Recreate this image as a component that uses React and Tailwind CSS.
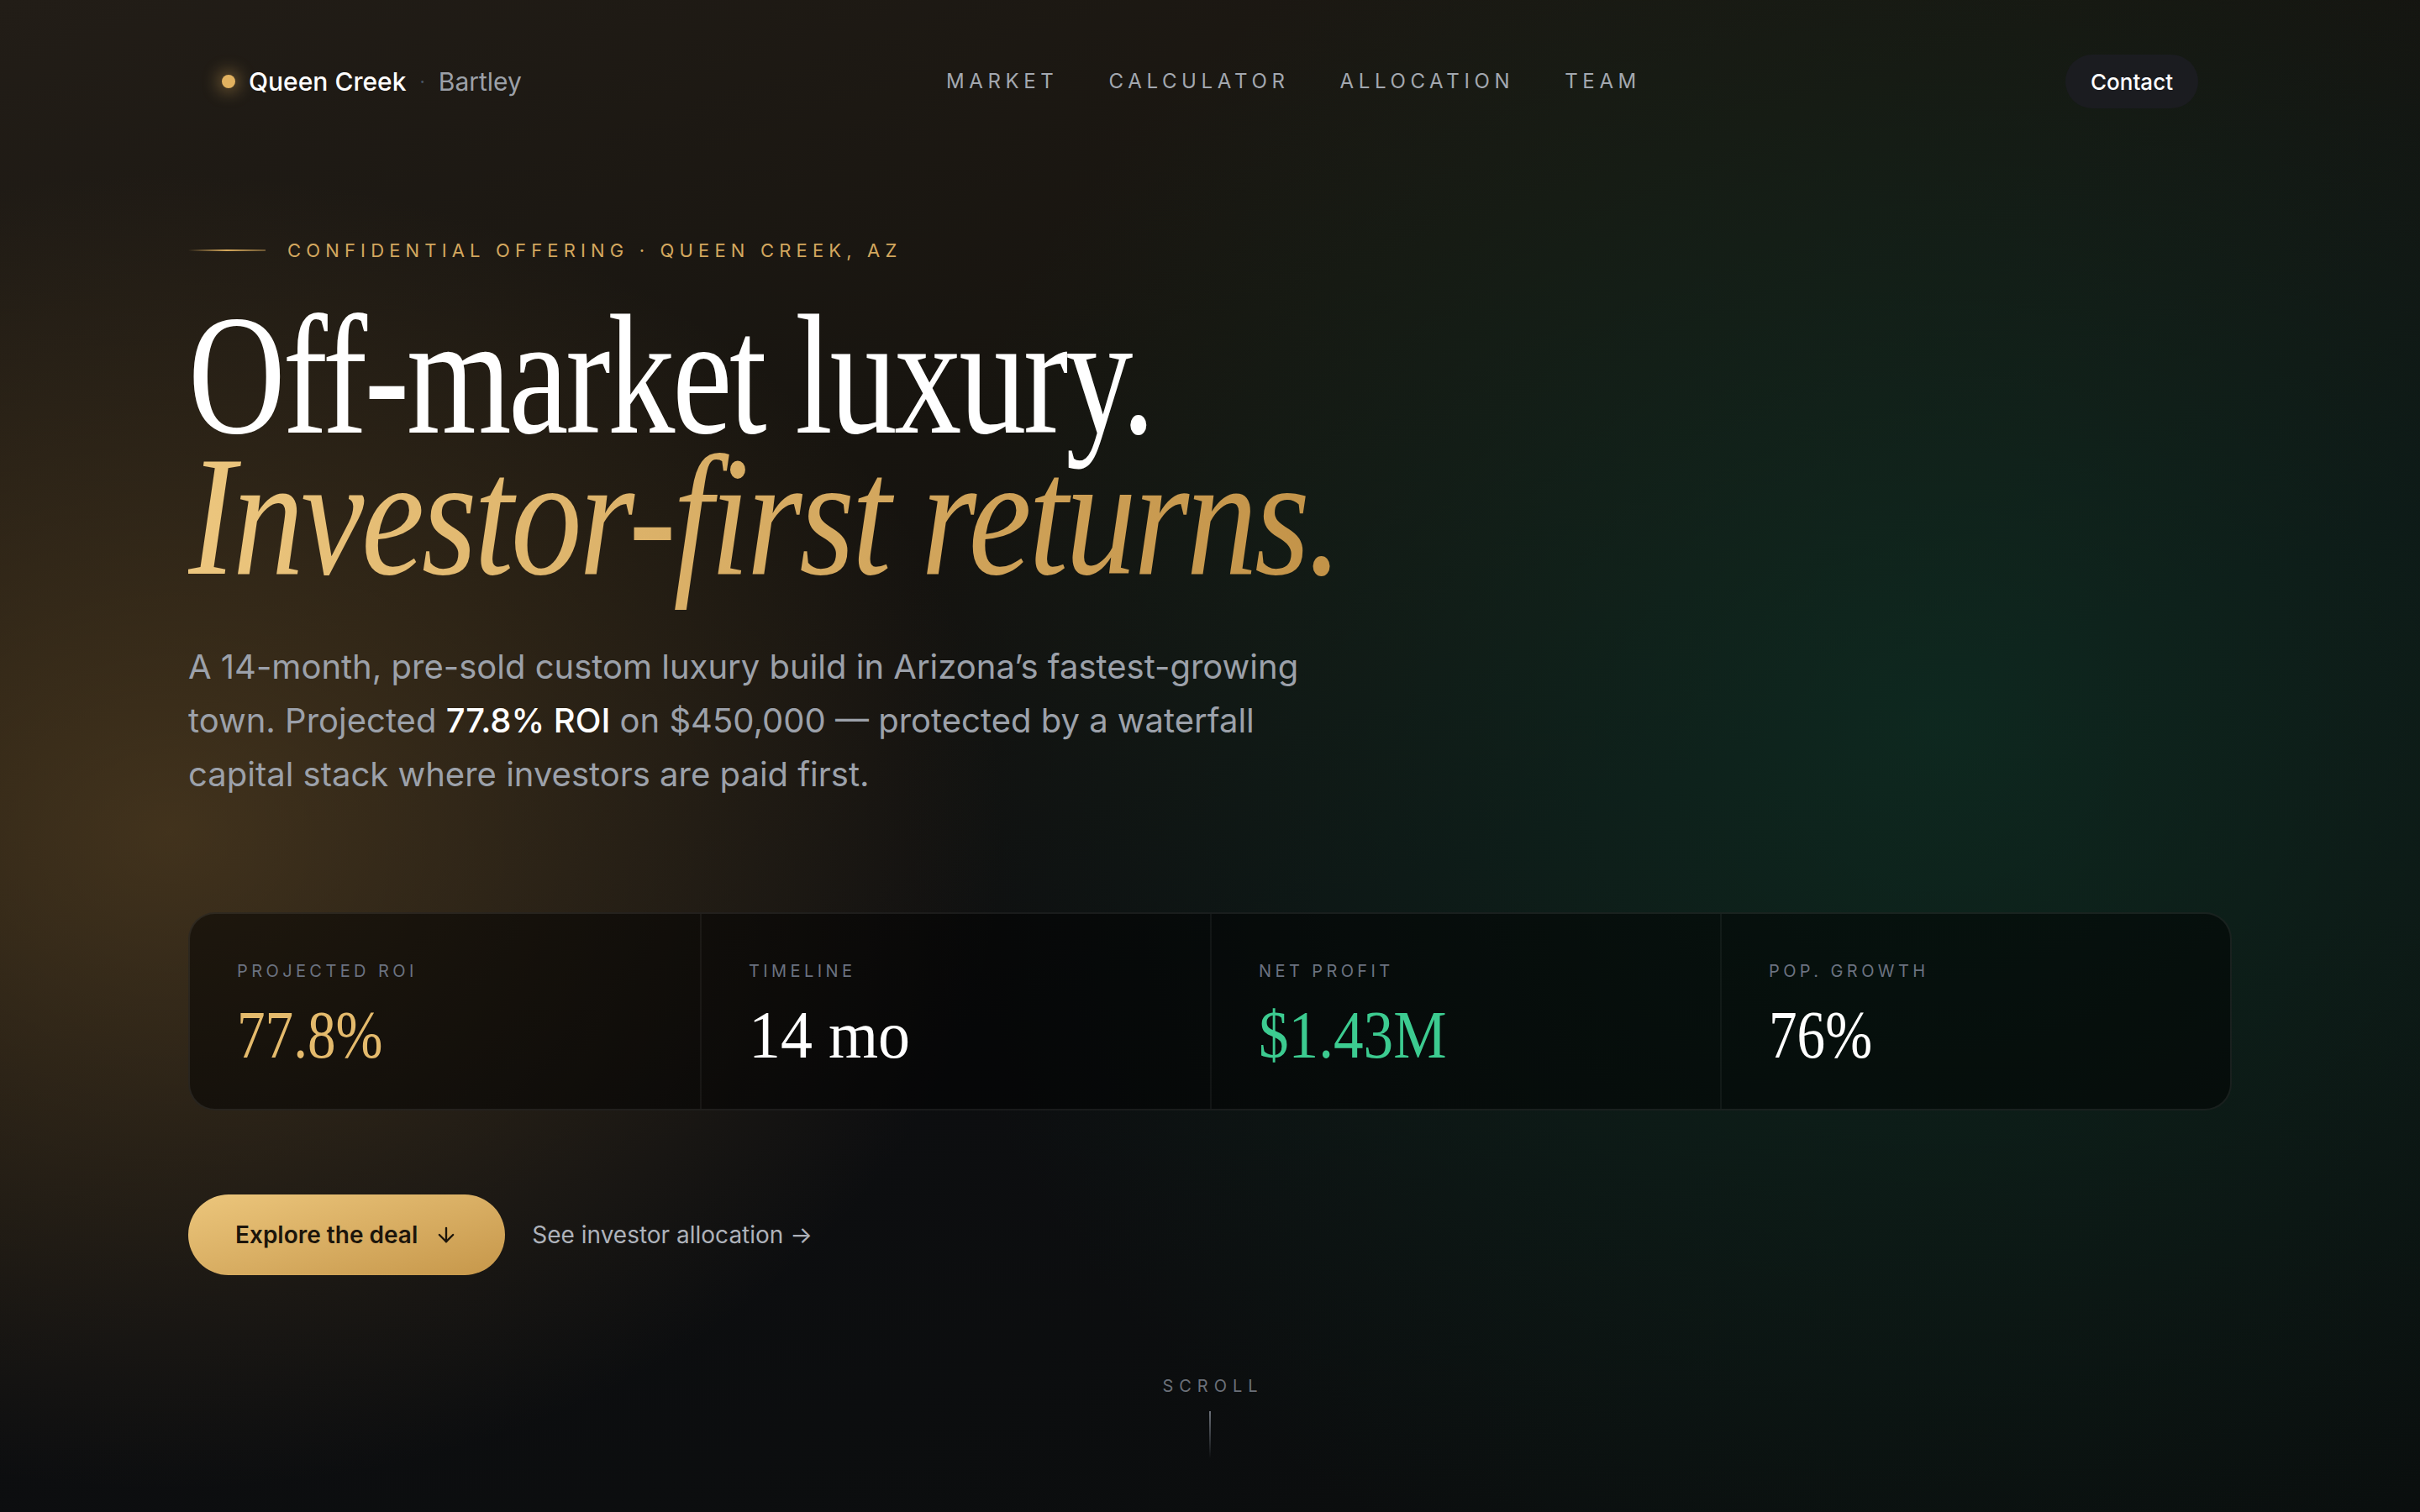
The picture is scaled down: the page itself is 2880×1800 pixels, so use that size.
import React from "react";
import { ArrowDown } from "lucide-react";

const stats = [
  { label: "Projected ROI", value: "77.8%", tone: "text-[#e4ba6c]", squeeze: "scale-x-[0.84]" },
  { label: "Timeline", value: "14 mo", tone: "text-white", squeeze: "scale-x-[0.95]" },
  { label: "Net Profit", value: "$1.43M", tone: "text-[#3ccb90]", squeeze: "scale-x-[0.89]" },
  { label: "Pop. Growth", value: "76%", tone: "text-white", squeeze: "scale-x-[0.84]" },
];

const navLinks = ["Market", "Calculator", "Allocation", "Team"];

function Nav() {
  return (
    <header className="flex h-[97px] items-center justify-between px-5">
      <div className="flex items-center text-[15px]">
        <span className="mr-2 h-2 w-2 rounded-full bg-[#e2b260] shadow-[0_0_10px_2px_rgba(226,178,96,0.45)]" />
        <span className="font-medium text-white">Queen Creek</span>
        <span className="mx-2 text-[11px] text-gray-600">·</span>
        <span className="text-[#9ca0a8]">Bartley</span>
      </div>

      <nav className="flex items-center gap-[30px]">
        {navLinks.map((link) => (
          <a
            key={link}
            href="#"
            className="text-[12px] uppercase tracking-[0.235em] text-[#a3a8b0]"
          >
            {link}
          </a>
        ))}
      </nav>

      <button className="h-8 rounded-full bg-[#1b1c20] px-[15px] text-[13px] font-medium text-white">
        Contact
      </button>
    </header>
  );
}

function StatsCard() {
  return (
    <div className="mt-[66px] grid grid-cols-4 rounded-2xl border border-white/[0.08] bg-black/50">
      {stats.map((s, i) => (
        <div
          key={s.label}
          className={`px-7 pt-[27px] pb-6 ${i > 0 ? "border-l border-white/[0.05]" : ""}`}
        >
          <div className="text-[10px] leading-[14px] uppercase tracking-[0.22em] text-[#6b7280]">
            {s.label}
          </div>
          <div
            className={`mt-[11px] origin-left font-['Liberation_Serif',serif] text-[40px] leading-[40px] ${s.squeeze} ${s.tone}`}
          >
            {s.value}
          </div>
        </div>
      ))}
    </div>
  );
}

export default function App() {
  return (
    <div className="[zoom:2]">
      <div className="relative h-[900px] w-[1440px] overflow-hidden bg-[#0a0b0d] bg-[image:radial-gradient(ellipse_46%_58%_at_7%_55%,rgba(110,82,42,0.5),transparent_75%),radial-gradient(ellipse_55%_80%_at_80%_48%,rgba(16,76,52,0.42),transparent_78%),linear-gradient(160deg,#221d17_0%,#17140f_32%,#0d0e10_58%,#0a0d0d_100%)] font-['Inter',sans-serif] text-white">
        <div className="mx-auto w-[1216px]">
          <Nav />

          <main>
            {/* eyebrow */}
            <div className="mt-11 flex items-center gap-[13px]">
              <span className="h-px w-[46px] bg-linear-to-r from-transparent via-[#d6a95c] to-[#d6a95c]/40" />
              <span className="text-[11px] leading-4 uppercase tracking-[0.28em] text-[#d3a75e]">
                Confidential Offering · Queen Creek, AZ
              </span>
            </div>

            <h1 className="mt-6 font-['Liberation_Serif',serif] text-[102px] leading-[84px] font-normal tracking-[-0.02em]">
              <span className="block origin-left scale-x-[0.785] whitespace-nowrap text-white">
                Off-market luxury.
              </span>
              <span className="block origin-left scale-x-[0.83] whitespace-nowrap">
                <span className="bg-linear-to-r from-[#ecc67e] to-[#c29247] bg-clip-text pr-2 italic text-transparent">
                  Investor-first returns.
                </span>
              </span>
            </h1>

            <p className="mt-8 max-w-2xl text-[20px] leading-8 text-[#9ca1aa]">
              A 14-month, pre-sold custom luxury build in Arizona’s fastest-growing
              town. Projected <span className="font-medium text-white">77.8% ROI</span> on $450,000 — protected by a waterfall
              capital stack where investors are paid first.
            </p>

            <StatsCard />

            <div className="mt-[50px] flex items-center gap-4">
              <button className="flex h-12 items-center gap-2.5 rounded-full bg-linear-to-br from-[#ecc67c] to-[#c6974a] pl-7 pr-[28px] text-[14px] font-semibold text-[#1c150b]">
                Explore the deal
                <ArrowDown size={14} strokeWidth={2} />
              </button>
              <a href="#" className="text-[14px] text-[#aeb2ba]">
                See investor allocation →
              </a>
            </div>
          </main>

          <div className="mt-[60px] flex flex-col items-center">
            <span className="pl-[0.35em] text-[10px] leading-3 uppercase tracking-[0.35em] text-[#6b7079]">
              Scroll
            </span>
            <span className="mt-[9px] h-7 w-px bg-linear-to-b from-[#6b7079] to-transparent" />
          </div>
        </div>
      </div>
    </div>
  );
}
